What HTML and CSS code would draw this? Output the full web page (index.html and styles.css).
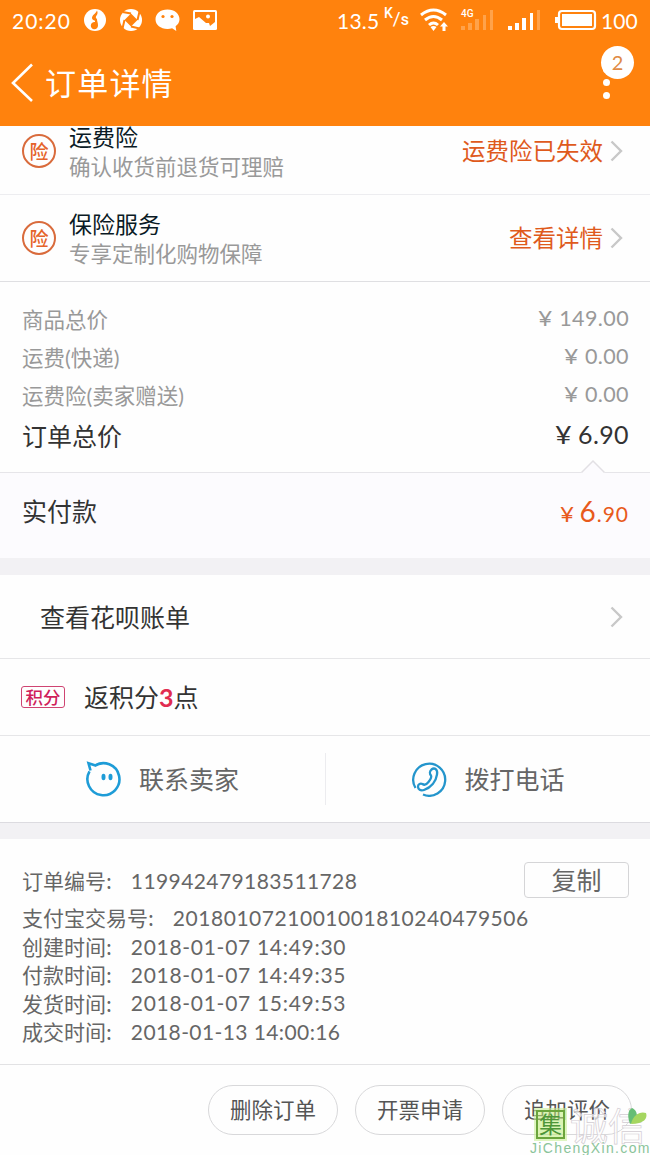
FILE: index.html
```html
<!DOCTYPE html>
<html lang="zh-CN">
<head>
<meta charset="utf-8">
<title>订单详情</title>
<link rel="stylesheet" href="styles.css">
</head>
<body>
<div class="screen">
  <header class="header">
    <div class="status">
      <span class="clock">20:20</span>
      <svg class="apps" width="136" height="24" viewBox="0 0 136 24">
        <circle cx="11" cy="12" r="11" fill="#fff"/>
        <path d="M13 2.500c-1 3-5 4.500-5 7.500 0 1.500 1.500 2.300 3 2.800v1.200a3.600 3.600 0 1 0 3 3.500c0-3-1-4-1-6.500-1.500-1-1.500-2-.5-3.500 1-1.300 1.500-3 .5-5z" fill="#ff820d"/>
        <circle cx="47" cy="12" r="11" fill="#fff"/>
        <path d="M47 5.500l6.500 6.500-6.500 6.500-6.500-6.500z" fill="#ff820d"/>
        <path d="M47 5.500l-8.500-1.500M53.500 12l2-8.500M47 18.500l8.500 2M40.500 12l-2 8.500" stroke="#ff820d" stroke-width="2"/>
        <path d="M83.500 1.500c-7 0-12 4.200-12 9.800s5 9.700 12 9.700c1.700 0 3.200-.2 4.600-.7l4.200 2.700-.7-4.800c2.400-1.700 3.900-4 3.900-6.900 0-5.600-5-9.800-12-9.800z" fill="#fff"/>
        <circle cx="79" cy="8.500" r="1.600" fill="#ff820d"/><circle cx="88" cy="8.500" r="1.600" fill="#ff820d"/>
        <rect x="109" y="2" width="24" height="20" rx="1.500" fill="#fff"/>
        <path d="M111 4h20v10l-5 4-1-3-3 0-7-6-4 2z" fill="#ff820d"/>
        <circle cx="124" cy="8.500" r="2" fill="#fff"/>
      </svg>
      <span class="rate">13.5</span>
      <span class="unit"><span class="unit-k">K</span><span class="unit-slash">/</span><span class="unit-s">s</span></span>
      <svg class="signals" width="206" height="26" viewBox="419 7 206 26">
        <g fill="none" stroke="#fff" stroke-width="3">
          <path d="M421 15q12.500-10 25 0"/><path d="M425 20q8.500-7 17 0"/><path d="M429 25q4.500-4 9 0"/>
        </g>
        <path d="M430.500 27l3 4 3-4q-3-2-6 0zM442.500 31v-4.500h-2.500l4-4.500 4 4.500h-2.500v4.500z" fill="#fff"/>
        <text x="461" y="17" class="net">4G</text>
        <path d="M461 26h4v4h-4zM468 23h4v7h-4zM475 19h4v11h-4zM483 15h3v15h-3zM490 10h3v20h-3z" fill="#ffa24a"/>
        <path d="M508 26h4v4h-4zM515 23h4v7h-4zM522 18h4v12h-4zM530 13h3v17h-3z" fill="#fff"/>
        <path d="M537 10h3v20h-3z" fill="#ffa24a"/>
        <rect x="559" y="11" width="36" height="18" rx="3" fill="none" stroke="#fff" stroke-width="2.200"/>
        <rect x="562" y="14" width="30" height="12" fill="#fff"/><path d="M555 17h3v6h-3z" fill="#fff"/>
      </svg>
      <span class="level">100</span>
    </div>
    <div class="nav">
      <svg width="24" height="40" viewBox="0 0 24 40"><path d="M21 1.500L2 20l19 18" fill="none" stroke="#fff" stroke-width="2.600"/></svg>
      <h1 class="title">订单详情</h1>
      <div class="more"><i></i><i></i><i></i><b class="badge">2</b></div>
    </div>
  </header>

  <section>
    <div class="service clipped">
      <span class="seal">险</span>
      <div class="stack"><div class="name">运费险</div><div class="desc">确认收货前退货可理赔</div></div>
      <span class="link">运费险已失效</span>
      <svg class="chev" width="14" height="22" viewBox="0 0 14 22"><path d="M1.500 1.500L11 11l-9.500 9.500"/></svg>
    </div>
    <div class="service">
      <span class="seal">险</span>
      <div class="stack"><div class="name">保险服务</div><div class="desc">专享定制化购物保障</div></div>
      <span class="link">查看详情</span>
      <svg class="chev" width="14" height="22" viewBox="0 0 14 22"><path d="M1.500 1.500L11 11l-9.500 9.500"/></svg>
    </div>
  </section>

  <section class="totals">
    <div class="line"><span>商品总价</span><span class="val"><i class="yen">¥</i>149.00</span></div>
    <div class="line"><span>运费(快递)</span><span class="val"><i class="yen">¥</i>0.00</span></div>
    <div class="line"><span>运费险(卖家赠送)</span><span class="val"><i class="yen">¥</i>0.00</span></div>
    <div class="line sum"><span>订单总价</span><span class="val"><i class="yen">¥</i>6.90</span></div>
    <svg class="notch" width="24" height="13" viewBox="0 0 24 13"><path d="M0 13L12 1l12 12z" fill="#fcfbfe"/><path d="M.5 12.500L12 1l11.500 11.500" fill="none" stroke="#e2e0e4" stroke-width="1.500"/></svg>
  </section>
  <section class="paid"><span>实付款</span><span class="price"><i class="yen">¥</i><b>6</b>.90</span></section>
  <div class="gap"></div>

  <section>
    <div class="bill"><span>查看花呗账单</span><svg class="chev" width="14" height="22" viewBox="0 0 14 22"><path d="M1.500 1.500L11 11l-9.500 9.500"/></svg></div>
    <div class="points"><span class="tag">积分</span><span class="earned">返积分<em>3</em>点</span></div>
    <div class="contact">
      <div class="action">
        <svg width="36" height="36" viewBox="0 0 36 36"><path d="M5.500 9.500L3.500 2.200l7 2.300M9.500 4.900A16 16 0 1 1 4.500 10.300" fill="none" stroke="#1e9cd7" stroke-width="2.600"/><ellipse cx="18.500" cy="16" rx="2" ry="3.200" fill="#1e9cd7"/><ellipse cx="25.500" cy="16" rx="2" ry="3.200" fill="#1e9cd7"/></svg>
        <span>联系卖家</span>
      </div>
      <div class="action">
        <svg width="36" height="36" viewBox="0 0 36 36"><g fill="none" stroke="#2495cc" stroke-width="2.300"><path d="M4.500 27A16 16 0 1 1 12 33.500"/><path d="M20.500 8.500c3-2.500 6.500 0 5.500 5-1 7-6 13-13 15.500-3.500 1.200-6-.5-6-3.500 0-2.500 2.500-3.500 4.500-2.500 2 1.500 4 .5 6-2s3.500-4.500 2.500-6.500c-1.500-1.500-1.500-4 .5-6z"/></g></svg>
        <span>拨打电话</span>
      </div>
    </div>
  </section>
  <div class="gap second"></div>

  <section class="info">
    <div class="row first"><span class="key">订单编号:</span><span class="num n1">119942479183511728</span><span class="copy">复制</span></div>
    <div class="row wide"><span class="key">支付宝交易号:</span><span class="num n2">2018010721001001810240479506</span></div>
    <div class="row"><span class="key">创建时间:</span><span class="num">2018-01-07 14:49:30</span></div>
    <div class="row"><span class="key">付款时间:</span><span class="num">2018-01-07 14:49:35</span></div>
    <div class="row"><span class="key">发货时间:</span><span class="num">2018-01-07 15:49:53</span></div>
    <div class="row"><span class="key">成交时间:</span><span class="num n6">2018-01-13 14:00:16</span></div>
  </section>

  <footer class="footer">
    <span class="pill">删除订单</span><span class="pill">开票申请</span><span class="pill">追加评价</span>
    <div class="mark">
      <span class="mark-box">集</span><span class="mark-name">诚信</span>
      <svg class="leaf" width="20" height="22" viewBox="0 0 20 22"><path d="M2 16C-1 8 0 2 4 0c4 2 6 5 4 13z" fill="#66bd75"/><path d="M3 16C5 7 12 3 18 5c2 5-2 11-15 11z" fill="#a5d660"/></svg>
      <span class="mark-url">JiChengXin.com</span>
    </div>
  </footer>
</div>
</body>
</html>
```
FILE: styles.css
```css
* { box-sizing: border-box; }
body {
  margin: 0;
  background: #fefefe;
  font-family: Lato, "Noto Sans CJK SC", sans-serif;
  color: #333;
}
i, em { font-style: normal; }
svg { flex: none; display: block; }
.screen { width: 650px; height: 1155px; overflow: hidden; white-space: nowrap; }

.header { position: relative; z-index: 1; height: 126px; background: #ff820d; color: #fff; }
.status { display: flex; align-items: center; height: 40px; padding-left: 12px; font-size: 21px; }
.clock { width: 72px; letter-spacing: 1px; }
.rate { margin-left: 117px; width: 46px; letter-spacing: .2px; }
.unit { display: flex; width: 24px; font-family: Roboto, sans-serif; line-height: 20px; margin-left: 1px; }
.unit-k { font-size: 14px; line-height: 13px; font-weight: 500; }
.unit-slash { font-size: 19px; line-height: 23px; }
.unit-s { font-size: 16px; line-height: 26px; font-weight: 500; }
.signals { margin-left: 11px; margin-right: -24px; }
.net { font: 500 10px Roboto, sans-serif; fill: #fff; }
.level { letter-spacing: .1px; }
.nav { display: flex; align-items: center; height: 86px; padding: 0 40px 0 11px; }
.title { margin: 0 auto 0 10px; font-size: 31px; font-weight: 400; line-height: 46px; letter-spacing: 1.200px; }
.more { position: relative; display: flex; flex-direction: column; gap: 6px; margin-top: -2px; }
.more i { width: 7px; height: 7px; border-radius: 50%; background: #fff; }
.badge {
  position: absolute; left: -2px; top: -20px; width: 33px; height: 33px;
  border-radius: 50%; background: #fff; color: #e08a45;
  font-size: 20px; font-weight: 400; line-height: 33px; text-align: center;
}

.service { display: flex; align-items: center; height: 87px; padding: 0 26px 0 22px; border-bottom: 1px solid #dfdfe2; }
.clipped { margin-top: -18px; border-color: #ededf0; }
.seal {
  width: 34px; height: 34px; border: 2px solid #d96b3c; border-radius: 50%;
  color: #e5632a; font-size: 19px; line-height: 31px; text-align: center; font-weight: 500;
}
.stack { margin: 2px auto 0 13px; line-height: 30px; }
.name { font-size: 23px; color: #0a1a25; }
.desc { font-size: 21.500px; color: #999; }
.link { font-size: 23.500px; color: #df5a1c; margin: -2px 7px 0 0; }
.chev path { fill: none; stroke: #c8c8c8; stroke-width: 2.400; }

.totals { position: relative; height: 191px; padding: 19px 21px 0 22px; border-bottom: 1px solid #e6e5e9; color: #999; font-size: 21.500px; }
.line { display: flex; justify-content: space-between; height: 38px; line-height: 38px; }
.val { margin-top: -2px; letter-spacing: .4px; }
.yen { display: inline-block; margin-right: 7px; transform: scaleX(1.15); }
.sum { height: 42px; line-height: 42px; font-size: 25px; color: #333; }
.notch { position: absolute; left: 581px; top: 178px; }
.paid { display: flex; justify-content: space-between; height: 85px; padding: 0 21px 0 22px; line-height: 77px; background: #fcfbfe; font-size: 25px; }
.price { font-size: 21px; color: #e85a1c; letter-spacing: 1px; }
.price .yen { margin-right: 5px; }
.price b { font-size: 28px; font-weight: 400; }
.gap { height: 17px; background: #f2f1f4; }

.bill { display: flex; align-items: center; justify-content: space-between; height: 84px; padding: 0 26px 0 40px; border-bottom: 1px solid #e6e6e8; font-size: 25px; }
.bill span, .earned, .action span { margin-top: -2px; }
.points { display: flex; align-items: center; height: 77px; padding-left: 21px; border-bottom: 1px solid #e6e6e8; font-size: 25px; }
.points em { color: #e12c50; font-weight: 700; }
.tag { width: 44px; height: 22px; margin-right: 19px; border: 1px solid #cf4472; border-radius: 3px; color: #d01f5c; font-size: 17.500px; line-height: 21px; text-align: center; font-weight: 500; }
.contact { display: flex; height: 87px; border-bottom: 1px solid #dcdbe0; }
.action { display: flex; align-items: center; flex: 1; padding-left: 85px; gap: 18px; color: #666; font-size: 25px; }
.action + .action { padding-left: 86px; background: linear-gradient(#ececef, #ececef) 0 50% / 1px 52px no-repeat; }
.second { height: 16px; }

.info { height: 226px; padding-top: 22px; padding-left: 22px; padding-right: 21px; border-bottom: 1px solid #e2e2e4; font-size: 21px; color: #666; }
.row { display: flex; align-items: center; height: 28.300px; }
.first { height: 38px; }
.wide { height: 33px; padding-top: 3px; }
.key { font-family: "Noto Sans CJK SC", sans-serif; line-height: 28px; }
.key::after { content: ""; display: inline-block; width: 16px; }
.num { margin-left: 3px; letter-spacing: .7px; }
.n1 { letter-spacing: .4px; }
.n2 { letter-spacing: .53px; }
.n6 { letter-spacing: .4px; }
.copy { width: 105px; height: 36px; margin-left: auto; border: 1px solid #d5d5d7; border-radius: 4px; font-size: 25px; line-height: 34px; text-align: center; }

.footer { position: relative; display: flex; justify-content: flex-end; gap: 17px; padding: 20px 18px 0 0; height: 91px; }
.pill { width: 130px; height: 50px; border: 1px solid #d8d8da; border-radius: 25px; color: #555; font-size: 21.500px; line-height: 49px; text-align: center; }
.mark { position: absolute; left: 530px; top: 41px; width: 120px; height: 50px; }
.mark-box { position: absolute; left: 6px; top: 4px; width: 29px; height: 29px; border: 2px solid #6ba53c; background: rgba(190, 235, 120, .55); outline: 2px solid rgba(200, 238, 150, .6); color: #4d9638; font-size: 23px; line-height: 25px; text-align: center; }
.mark-name { position: absolute; left: 40px; top: 0; font-size: 38px; line-height: 38px; color: rgba(255, 255, 255, .7); -webkit-text-stroke: .7px #d3cdd3; }
.leaf { position: absolute; left: 98px; top: 2px; }
.mark-url { position: absolute; left: 0; top: 33px; font: 14px/18px "Liberation Sans", sans-serif; letter-spacing: 1.350px; color: #8bc49a; }
```
